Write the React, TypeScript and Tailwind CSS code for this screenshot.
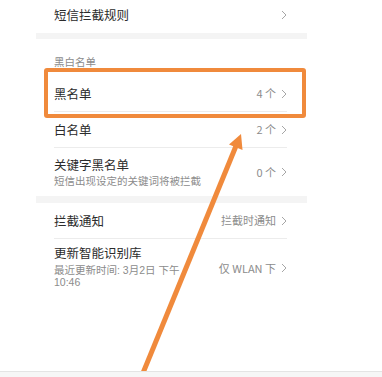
import { ReactNode } from 'react';

const font = { fontFamily: '"Noto Sans CJK SC", "Noto Sans", sans-serif' };

function Chevron() {
  return (
    <svg width="6" height="10" viewBox="0 0 6 10" className="ml-[5px] shrink-0">
      <path d="M1 1 L5 5 L1 9" fill="none" stroke="#a6a6a6" strokeWidth="1" />
    </svg>
  );
}

function Row({ title, sub, value, divider = true, className = '' }: { title: string; sub?: ReactNode; value?: string; divider?: boolean; className?: string }) {
  return (
    <div className={`flex items-center justify-between ${divider ? 'border-b border-[#ececec]' : ''} ${className}`}>
      <div className="flex flex-col">
        <span className="text-[12.5px] leading-[16px] text-[#2b2b2b]">{title}</span>
        {sub && <span className="mt-[2px] text-[10.5px] leading-[12px] text-[#8c8c8c]">{sub}</span>}
      </div>
      <div className="flex items-center text-[11px] text-[#8c8c8c]">
        {value && <span>{value}</span>}
        <Chevron />
      </div>
    </div>
  );
}

export default function App() {
  return (
    <div className="relative w-[382px] h-[377px] bg-white flex flex-col overflow-hidden" style={font}>
      <div className="flex-1">
        <div className="relative ml-[36px] w-[271px]">
          <div className="px-[18px] pr-[20px]">
            <Row title="短信拦截规则" divider={false} className="h-[33px] pb-[3px]" />
          </div>
          <div className="h-[6px] bg-[#f4f4f4]" />

          <div className="px-[18px] pr-[20px]">
            <div className="pt-[16px] pb-[7px] text-[10.5px] leading-[14px] text-[#8c8c8c]">黑白名单</div>
            <Row title="黑名单" value="4 个" className="h-[36px]" />
            <Row title="白名单" value="2 个" className="h-[36px]" />
            <Row title="关键字黑名单" sub="短信出现设定的关键词将被拦截" value="0 个" divider={false} className="h-[48px]" />
          </div>
          <div className="h-[7px] bg-[#f4f4f4]" />

          <div className="px-[18px] pr-[20px]">
            <Row title="拦截通知" value="拦截时通知" className="h-[36px]" />
            <div className="flex items-start justify-between pt-[6px]">
              <div className="flex flex-col">
                <span className="text-[12.5px] leading-[16px] text-[#2b2b2b]">更新智能识别库</span>
                <span
                  className="mt-[3px] text-[10.5px] leading-[12px] text-[#8c8c8c] font-['Liberation_Sans','Noto_Sans_CJK_SC',sans-serif]"
                >
                  最近更新时间: 3月2日 下午
                  <br />
                  10:46
                </span>
              </div>
              <div className="flex items-center mt-[15px] text-[11px] text-[#8c8c8c]">
                <span>仅 WLAN 下</span>
                <Chevron />
              </div>
            </div>
          </div>

          {/* highlight box */}
          <div className="absolute left-[8px] top-[68px] w-[262px] h-[50px] border-[4px] border-[#f08a3c] rounded-[3px]" />
        </div>
      </div>

      <div className="h-[6px] bg-[#f6f6f6] border-t border-[#e4e4e4]" />

      {/* arrow */}
      <svg className="absolute left-0 top-0 pointer-events-none" width="382" height="371" viewBox="0 0 382 371">
        <line x1="143" y1="373" x2="236" y2="146" stroke="#f08a3c" strokeWidth="5" />
        <polygon points="241,134 229,144.5 242.5,150" fill="#f08a3c" />
      </svg>
    </div>
  );
}
